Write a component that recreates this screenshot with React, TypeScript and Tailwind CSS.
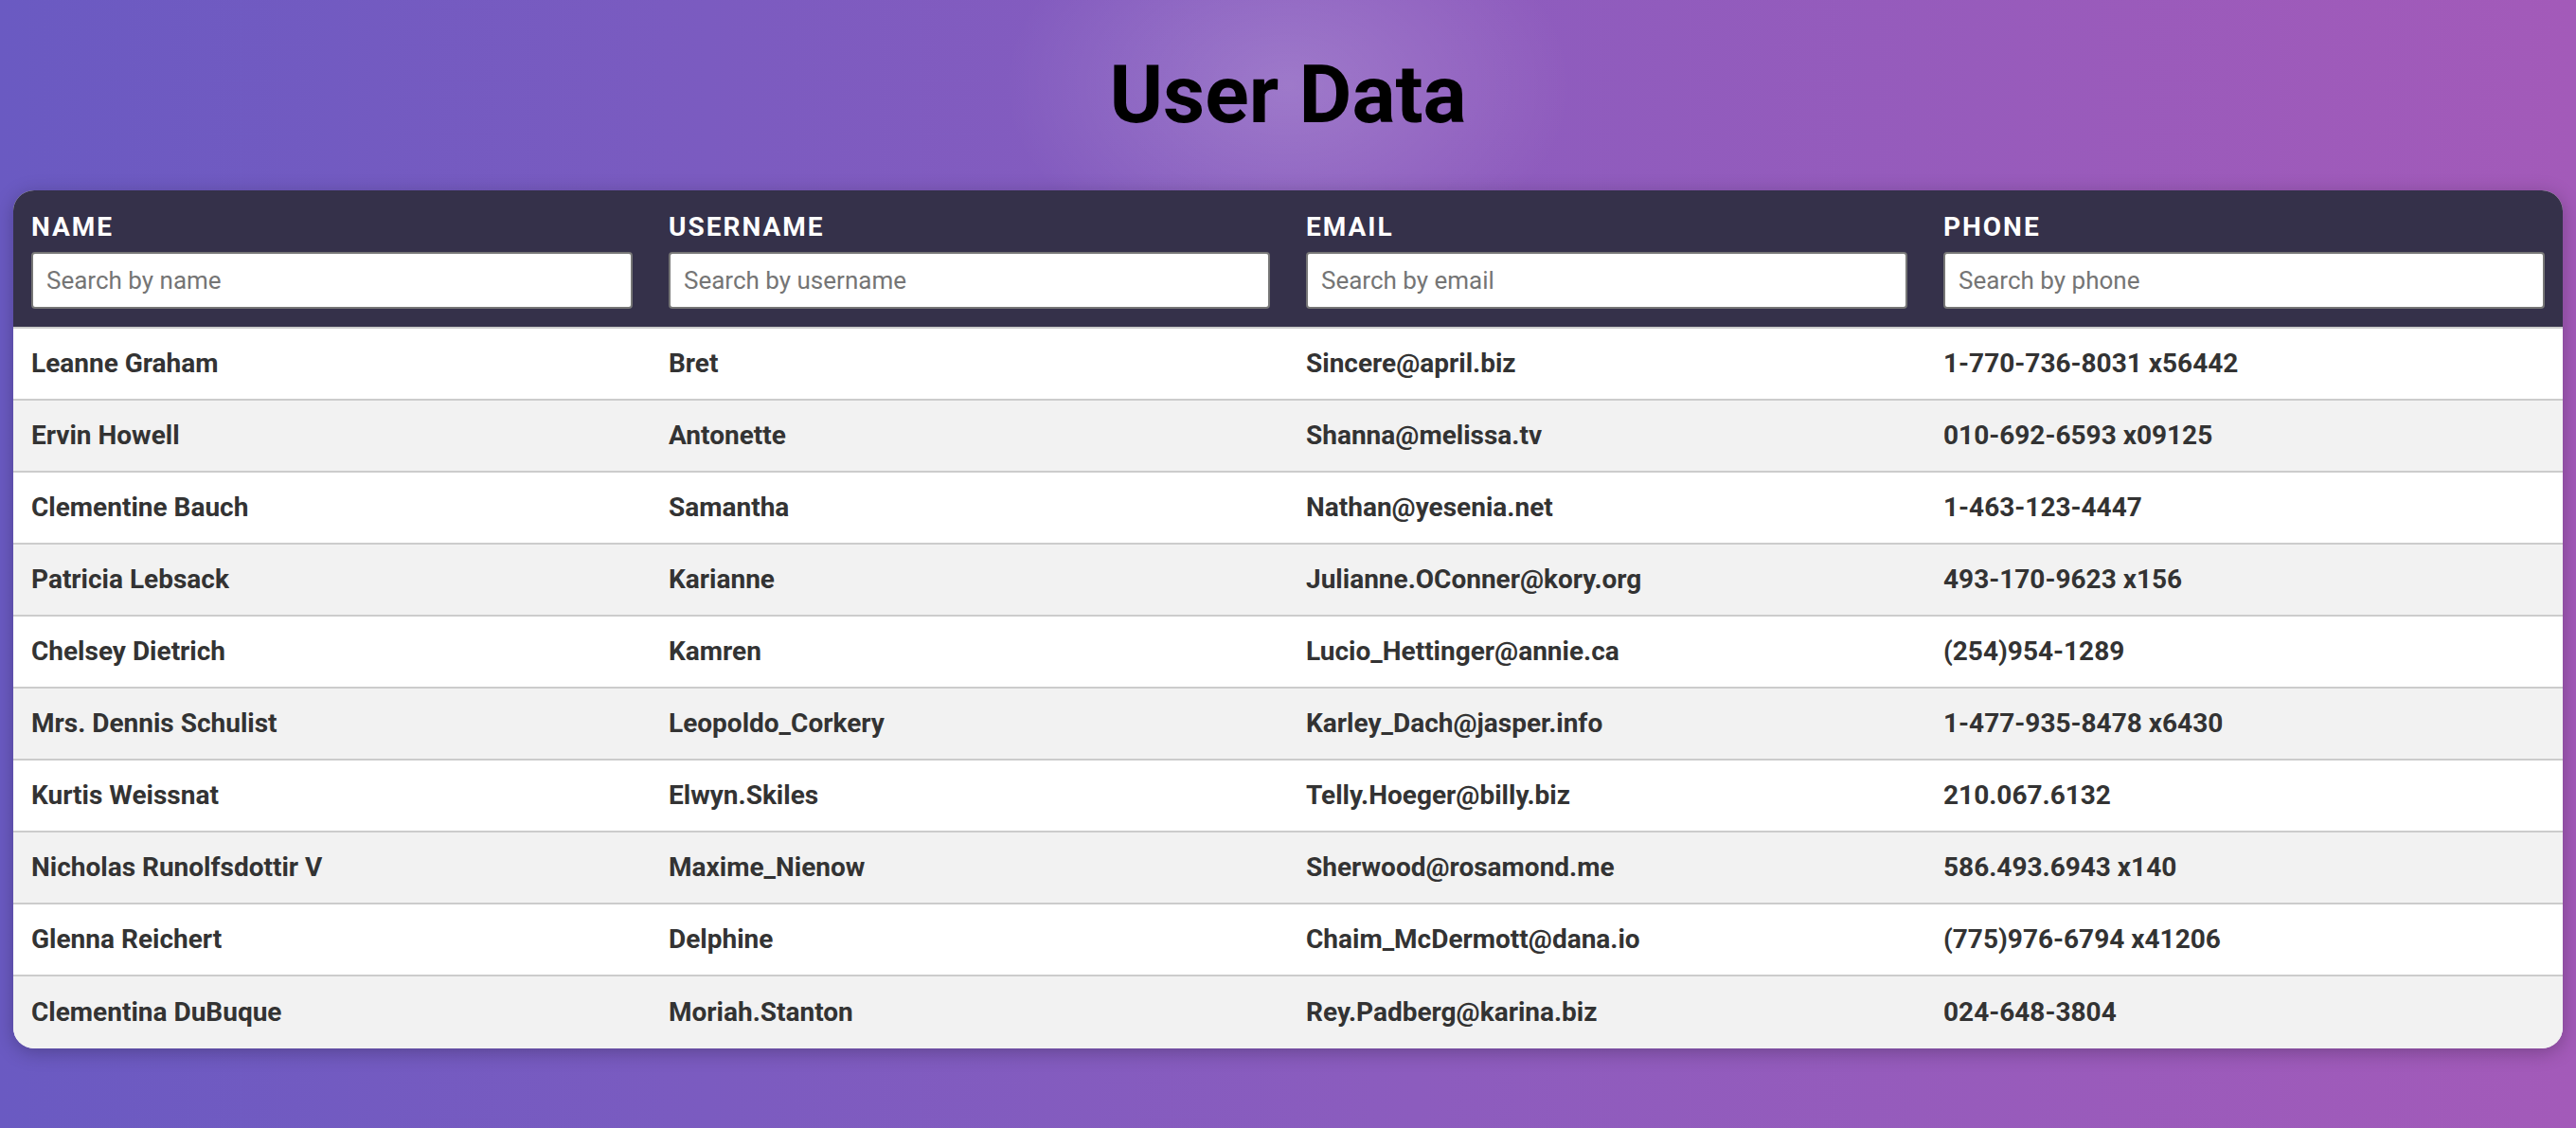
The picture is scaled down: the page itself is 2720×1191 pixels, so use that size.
import React from "react";

const users = [
  ["Leanne Graham", "Bret", "Sincere@april.biz", "1-770-736-8031 x56442"],
  ["Ervin Howell", "Antonette", "Shanna@melissa.tv", "010-692-6593 x09125"],
  ["Clementine Bauch", "Samantha", "Nathan@yesenia.net", "1-463-123-4447"],
  ["Patricia Lebsack", "Karianne", "Julianne.OConner@kory.org", "493-170-9623 x156"],
  ["Chelsey Dietrich", "Kamren", "Lucio_Hettinger@annie.ca", "(254)954-1289"],
  ["Mrs. Dennis Schulist", "Leopoldo_Corkery", "Karley_Dach@jasper.info", "1-477-935-8478 x6430"],
  ["Kurtis Weissnat", "Elwyn.Skiles", "Telly.Hoeger@billy.biz", "210.067.6132"],
  ["Nicholas Runolfsdottir V", "Maxime_Nienow", "Sherwood@rosamond.me", "586.493.6943 x140"],
  ["Glenna Reichert", "Delphine", "Chaim_McDermott@dana.io", "(775)976-6794 x41206"],
  ["Clementina DuBuque", "Moriah.Stanton", "Rey.Padberg@karina.biz", "024-648-3804"],
];

const cols = [
  ["NAME", "Search by name"],
  ["USERNAME", "Search by username"],
  ["EMAIL", "Search by email"],
  ["PHONE", "Search by phone"],
];

export default function App() {
  return (
    <div
      className="w-[2720px] h-[1191px] overflow-hidden bg-[radial-gradient(ellipse_300px_200px_at_1360px_90px,rgba(255,255,255,0.18),transparent),linear-gradient(90deg,#6a5ac2,#8c5cbe_55%,#a35ab9)] px-[14px]"
      style={{ fontFamily: "Roboto, 'Liberation Sans', sans-serif" }}
    >
      <h1 className="h-[201px] flex items-center justify-center pb-[2px] text-[86px] font-bold text-black leading-none">
        User Data
      </h1>
      <div className="rounded-[22px] overflow-hidden bg-white shadow-[0_4px_20px_rgba(0,0,0,0.25)]">
        <div className="grid grid-cols-4 bg-[#35314a] h-[146px] border-b-2 border-[#cccccc]">
          {cols.map(([label, ph]) => (
            <div key={label} className="px-[19px] pt-[22px]">
              <div className="text-[28px] font-bold text-white tracking-[2px] leading-[34px]">{label}</div>
              <input
                placeholder={ph}
                className="mt-[9px] w-full h-[60px] bg-white border-2 border-[#767676] rounded-[4px] px-[14px] text-[26px] text-black placeholder:text-[#757575] outline-none"
              />
            </div>
          ))}
        </div>
        {users.map((u, i) => (
          <div
            key={i}
            className={`grid grid-cols-4 h-[76px] items-center ${i % 2 ? "bg-[#f2f2f2]" : "bg-white"} ${i < users.length - 1 ? "border-b-2 border-[#cccccc]" : ""}`}
          >
            {u.map((c, j) => (
              <div key={j} className="px-[19px] text-[28px] font-bold text-[#333333]">{c}</div>
            ))}
          </div>
        ))}
      </div>
    </div>
  );
}
